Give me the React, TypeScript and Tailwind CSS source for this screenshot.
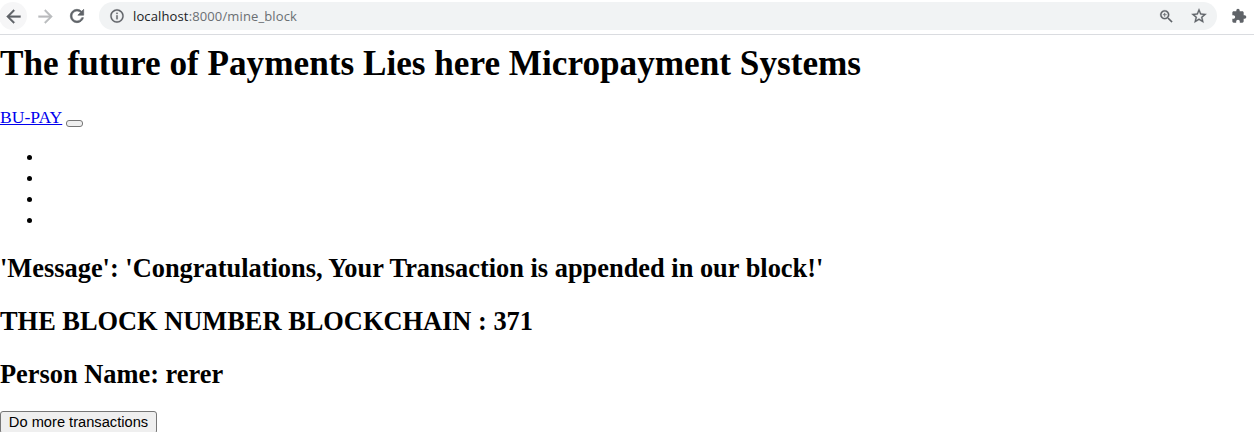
import {
  MdArrowBack,
  MdArrowForward,
  MdExtension,
  MdInfoOutline,
  MdRefresh,
  MdStarBorder,
  MdZoomIn,
} from 'react-icons/md';

function BrowserBar() {
  return (
    <div className="flex h-[35px] shrink-0 items-start border-b border-[#dadce0] pt-0.5 text-[#5f6368]">
      <div className="-ml-px flex h-7 w-7 items-center justify-center rounded-full bg-[#f6f6f7]">
        <MdArrowBack className="h-[21px] w-[21px] [&>path:last-child]:[stroke-width:0.4]" />
      </div>
      <div className="ml-2 flex h-7 w-5 items-center text-[#babcbe]">
        <MdArrowForward className="h-[21px] w-[21px] shrink-0 [&>path:last-child]:[stroke-width:0.4]" />
      </div>
      <div className="ml-3 flex h-7 w-5 items-center">
        <MdRefresh className="h-5 w-5 [&>path:last-child]:[stroke-width:0.8]" />
      </div>
      <div className="ml-3 flex h-7 w-[1118px] items-center rounded-full bg-[#f1f3f4]">
        <MdInfoOutline className="ml-2.5 h-4 w-4 [&>path:last-child]:[stroke-width:0.3]" />
        <span className="ml-2 whitespace-nowrap font-['Open_Sans',sans-serif] text-[13px] leading-7 tracking-[0.13px] text-[#6b6f73]">
          <span className="text-[#202124]">localhost</span>:8000/mine_block
        </span>
        <MdZoomIn className="ml-auto h-[17px] w-[17px] [&>path]:[stroke-width:0.3] [&>path[fill=none]]:[stroke-width:0]" />
        <MdStarBorder className="mr-[9px] ml-[15px] h-[18px] w-[18px] [&>path:last-child]:[stroke-width:0.4]" />
      </div>
      <div className="ml-3.5 flex h-7 items-center">
        <MdExtension className="h-4 w-4" />
      </div>
    </div>
  );
}

export default function App() {
  return (
    <div className="flex h-[432px] w-[1254px] flex-col overflow-hidden bg-white font-['Liberation_Serif',serif] text-[17.6px] text-black">
      <BrowserBar />
      <main className="flex flex-col items-start">
        <h1 className="mt-[9px] h-10 whitespace-nowrap text-[35.2px] leading-10 font-bold">
          The future of Payments Lies here Micropayment Systems
        </h1>
        <nav className="mt-[23px] flex h-[21px] items-start gap-1">
          <a href="#" className="leading-[21px] text-[#0000ee] underline">BU-PAY</a>
          <button
            type="button"
            aria-label="Menu"
            className="mt-[13px] h-[7px] w-[17px] rounded-[3px] border border-[#767676] bg-[#efefef]"
          />
        </nav>
        <ul className="mt-[18px] list-disc pl-11">
          <li className="h-[21px] leading-[21px]" />
          <li className="h-[21px] leading-[21px]" />
          <li className="h-[21px] leading-[21px]" />
          <li className="h-[21px] leading-[21px]" />
        </ul>
        <div className="mt-[23px] flex flex-col gap-[23px] whitespace-nowrap text-[26.4px] leading-[30px] font-bold">
          <h2>'Message': 'Congratulations, Your Transaction is appended in our block!'</h2>
          <h2>THE BLOCK NUMBER BLOCKCHAIN : 371</h2>
          <h2>Person Name: rerer</h2>
        </div>
        <button
          type="button"
          className="mt-[22px] h-[23px] w-[157px] shrink-0 whitespace-nowrap rounded-[3px] border border-[#767676] bg-[#efefef] font-['Liberation_Sans',sans-serif] text-[14.667px] leading-[21px]"
        >
          Do more transactions
        </button>
      </main>
    </div>
  );
}
